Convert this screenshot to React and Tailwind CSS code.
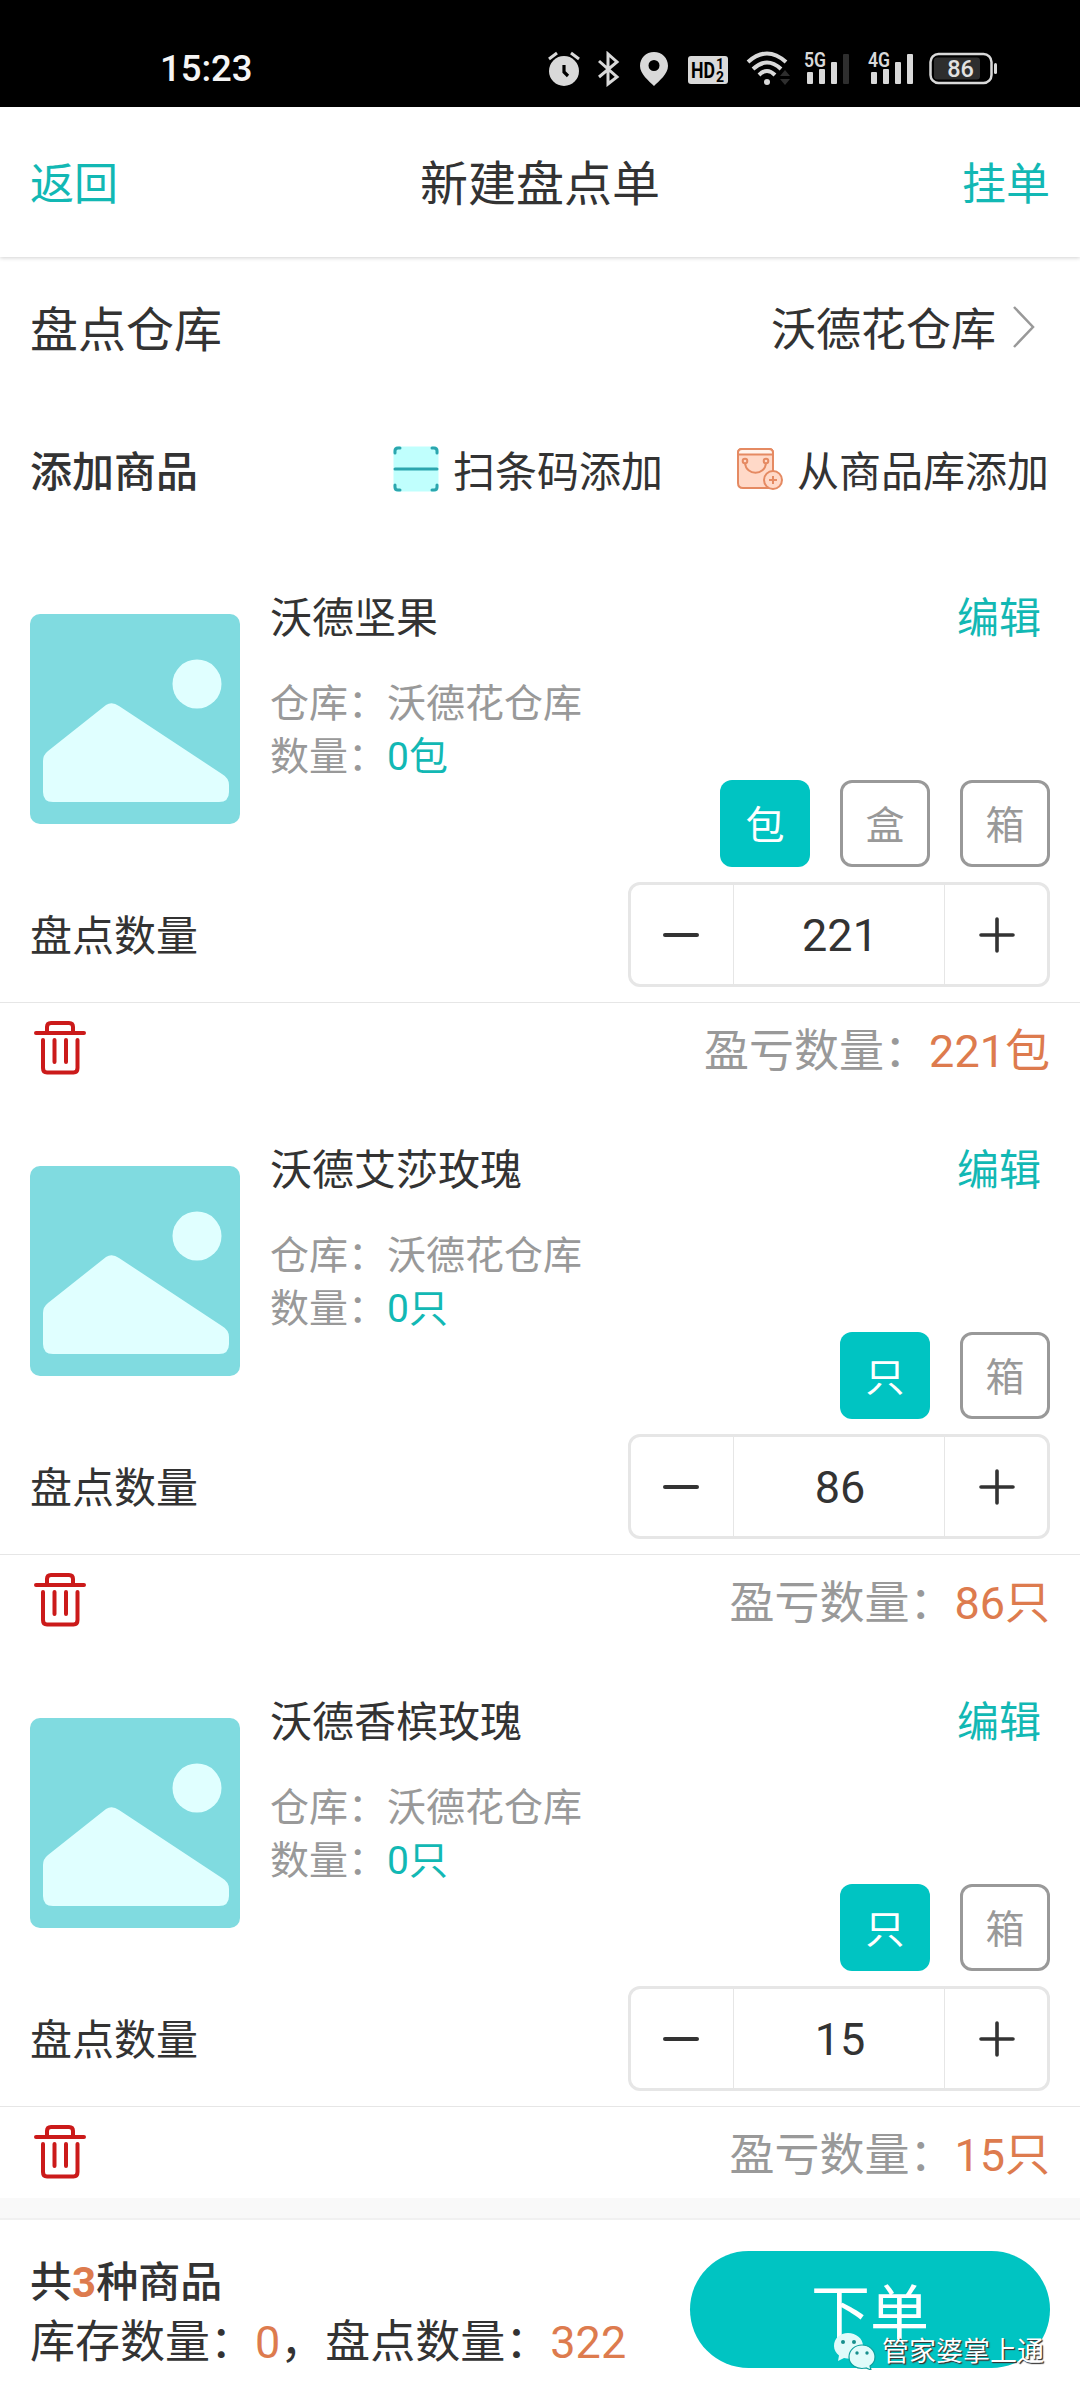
import { useState } from "react";

const initialItems = [
  { id: 1, name: "沃德坚果", warehouse: "沃德花仓库", stock: 0, units: ["包", "盒", "箱"], count: 221 },
  { id: 2, name: "沃德艾莎玫瑰", warehouse: "沃德花仓库", stock: 0, units: ["只", "箱"], count: 86 },
  { id: 3, name: "沃德香槟玫瑰", warehouse: "沃德花仓库", stock: 0, units: ["只", "箱"], count: 15 },
];

function SignalBars({ label, dimLast }) {
  return (
    <svg width="48" height="48" viewBox="0 -6 48 48" fill="#d9d9d9">
      <text x="1" y="15.500" fontSize="20" fontWeight="600" textLength="22" lengthAdjust="spacingAndGlyphs">
        {label}
      </text>
      <rect x="4" y="21" width="6" height="12" rx="1" />
      <rect x="16" y="18" width="6" height="15" rx="1" />
      <rect x="28" y="11" width="6" height="22" rx="1" />
      <rect x="40" y="3" width="6" height="30" rx="1" fill={dimLast ? "#2e2e2e" : "#d9d9d9"} />
    </svg>
  );
}

function StatusBar() {
  return (
    <div className="flex h-[107px] items-center bg-black pt-[31px] pl-[160px] text-[#e2e2e2]">
      <div className="w-[387px] text-[36.5px] leading-none font-medium text-[#f5f5f5]">15:23</div>
      <svg width="34" height="36" viewBox="0 0 34 36">
        <circle cx="17" cy="20" r="15" fill="#d9d9d9" />
        <path d="M2 8l8-6M32 8l-8-6" stroke="#d9d9d9" strokeWidth="3" />
        <path d="M17 14v7l4 4" stroke="#000" strokeWidth="3.2" fill="none" />
      </svg>
      <svg className="ml-[15px]" width="24" height="36" viewBox="0 0 24 36" fill="none" stroke="#d9d9d9" strokeWidth="3">
        <path d="M3 10l18 16-9 7V3l9 8L3 26" />
      </svg>
      <svg className="ml-[19px]" width="30" height="36" viewBox="0 0 30 36" fill="#d9d9d9" fillRule="evenodd">
        <path d="M15 1C7 1 1 7 1 15c0 8 9 15 14 20 5-5 14-12 14-20C29 7 23 1 15 1zm0 8a5.500 5.500 0 110 11 5.500 5.500 0 010-11z" />
      </svg>
      <svg className="ml-[18px]" width="42" height="36" viewBox="0 0 42 36" fontWeight="700">
        <rect x="1" y="5" width="40" height="28" rx="3" fill="#d9d9d9" />
        <text x="4" y="27" fontSize="22" textLength="24" lengthAdjust="spacingAndGlyphs">HD</text>
        <text x="29" y="18" fontSize="14">1</text>
        <text x="29" y="31" fontSize="14">2</text>
      </svg>
      <svg className="ml-[17px]" width="46" height="36" viewBox="0 0 46 36" fill="none" stroke="#d9d9d9" strokeWidth="4">
        <path d="M2 11Q21-6 40 11M7 18Q21 5 35 18M13 24Q21 16 29 24" />
        <circle cx="21" cy="31" r="3" fill="#d9d9d9" stroke="none" />
        <path d="M34 25l5-6 5 6zM34 28l5 6 5-6z" fill="#2e2e2e" stroke="none" />
      </svg>
      <div className="ml-[11px]"><SignalBars label="5G" dimLast /></div>
      <div className="ml-[16px]"><SignalBars label="4G" /></div>
      <svg className="ml-[14px]" width="70" height="36" viewBox="0 0 70 36">
        <rect x="1.500" y="3" width="61" height="29" rx="8" fill="none" stroke="#d9d9d9" strokeWidth="2.500" />
        <rect x="5" y="6.500" width="46" height="22" rx="3" fill="#2e2e2e" />
        <rect x="65" y="12" width="3" height="11" rx="1.500" fill="#d9d9d9" />
        <text x="31.500" y="26" fontSize="23.500" fontWeight="500" textAnchor="middle" fill="#e2e2e2">86</text>
      </svg>
    </div>
  );
}

function ScanIcon() {
  return (
    <svg className="mb-[6px]" width="46" height="46" viewBox="0 0 46 46" fill="none" stroke="#2ba6ae" strokeWidth="3" strokeLinecap="round">
      <rect x="0.500" y="0.500" width="45" height="45" rx="4" fill="#c0fffd" stroke="none" />
      <path d="M2 7V5q0-3 3-3h2M39 2h2q3 0 3 3v2M2 39v2q0 3 3 3h2M39 44h2q3 0 3-3v-2" />
      <path d="M2 23h42" />
    </svg>
  );
}

function BagIcon() {
  return (
    <svg className="mb-[6px]" width="46" height="42" viewBox="0 0 46 42" fill="#ffd9c8" stroke="#e58a62" strokeWidth="2">
      <path d="M1 5q0-4 4-4h27q4 0 4 4v31q0 4-4 4H6q-5 0-5-5z" />
      <path d="M1 6.500V5q0-4 4-4h27q4 0 4 4v1.500z" fill="#fff3ec" />
      <path d="M8 15c1 13 20 13 21 0" fill="none" />
      <circle cx="8" cy="13" r="2.300" />
      <circle cx="29" cy="13" r="2.300" />
      <circle cx="36" cy="32" r="9" />
      <path d="M32 32h8M36 28v8" />
    </svg>
  );
}

function Placeholder() {
  return (
    <svg className="shrink-0" width="210" height="210" viewBox="0 0 210 210">
      <rect width="210" height="210" rx="10" fill="#80dbe0" />
      <circle cx="167" cy="70" r="24.500" fill="#e0ffff" />
      <path
        d="M76 91q6-4 13 1l103 68q7 4 7 11v7q0 10-10 10H23q-10 0-10-10v-31q0-6 5-10z"
        fill="#e0ffff"
      />
    </svg>
  );
}

function TrashIcon() {
  return (
    <svg width="52" height="54" viewBox="0 0 52 54" fill="none" stroke="#cb1a1a" strokeWidth="4" strokeLinecap="round">
      <path d="M2 12h48M13 11V6q0-4 4-4h18q4 0 4 4v5" />
      <path d="M9 19v28q0 4.500 4 4.500h26.500q4 0 4-4.500V19M20.500 19v22M32 19v22" />
    </svg>
  );
}

function Stepper({ value, onChange }) {
  return (
    <div className="flex h-[105px] w-[422px] rounded-[12px] border-3 border-[#e6e6e6]">
      <button type="button" onClick={() => onChange(value - 1)} className="flex w-[103px] items-center justify-center border-r border-[#e6e6e6] pr-[2px]">
        <span className="h-[4px] w-[36px] rounded-full bg-[#333]" />
      </button>
      <div className="flex flex-1 items-center justify-center pt-[2px] pl-[2px] text-[45px] leading-none">{value}</div>
      <button type="button" onClick={() => onChange(value + 1)} className="flex w-[103px] items-center justify-center border-l border-[#e6e6e6] pl-[2px]">
        <svg width="36" height="36" viewBox="0 0 36 36" stroke="#333" strokeWidth="3.600" strokeLinecap="round">
          <path d="M2 18h32M18 2v32" />
        </svg>
      </button>
    </div>
  );
}

function ItemCard({ item, onCount }) {
  const [unit, setUnit] = useState(item.units[0]);

  return (
    <div className="h-[552px]">
      <div className="flex h-[238px] px-[30px] pt-[44px]">
        <div className="pt-[28px]"><Placeholder /></div>
        <div className="ml-[30px] flex-1 pt-[2px]">
          <div className="flex justify-between pr-[9px] text-[42px] leading-[62px]">
            <span>{item.name}</span>
            <button type="button" className="text-[#12b8b4]">编辑</button>
          </div>
          <div className="mt-[28px] text-[39px] leading-[53px] text-[#999]">
            <div>仓库：{item.warehouse}</div>
            <div>
              数量：<span className="text-[#12b8b4]">{item.stock}{unit}</span>
            </div>
          </div>
        </div>
      </div>
      <div className="flex h-[87px] justify-end gap-[30px] pr-[30px]">
        {item.units.map((u) => (
          <button
            key={u}
            type="button"
            onClick={() => setUnit(u)}
            className={
              u === unit
                ? "h-[87px] w-[90px] rounded-[12px] bg-[#00c4c2] pt-[5px] text-[39px] leading-none text-white"
                : "h-[87px] w-[90px] rounded-[12px] border-3 border-[#999] pt-[5px] text-[39px] leading-none text-[#999]"
            }
          >
            {u}
          </button>
        ))}
      </div>
      <div className="mt-[15px] flex h-[105px] items-center justify-between px-[30px]">
        <span className="pt-[5px] text-[42px] leading-none">盘点数量</span>
        <Stepper value={item.count} onChange={onCount} />
      </div>
      <div className="mt-[15px] flex h-[92px] items-start justify-between border-t border-[#e6e6e6] pr-[30px] pl-[34px]">
        <button type="button" className="mt-[18px]"><TrashIcon /></button>
        <div className="mt-[16px] text-[45px] leading-[66px] text-[#999]">
          盈亏数量：<span className="text-[#dd7b4e]">{item.count - item.stock}{unit}</span>
        </div>
      </div>
    </div>
  );
}

function Watermark() {
  return (
    <div className="absolute top-[2330px] left-[833px] flex items-center gap-[6px]">
      <svg width="43" height="38" viewBox="0 0 43 38" fill="#e0fbfa">
        <path d="M15 1C7 1 1 6.500 1 14c0 4 2 7 5 9.500L5 29l6-3c13 3 19-4 19-12C30 6.500 23 1 15 1z" />
        <path
          d="M29 13c-7 0-13 5-13 12 0 8 8 13 17 11l5 2-1-4c3-2 5-5 5-9 0-7-6-12-13-12z"
          stroke="#0d9f9d"
          strokeWidth="1.200"
        />
        <g fill="#178f8d">
          <circle cx="10" cy="10" r="2" />
          <circle cx="21" cy="10" r="2" />
          <circle cx="24" cy="21" r="1.700" />
          <circle cx="34" cy="21" r="1.700" />
        </g>
      </svg>
      <span className="pt-[2px] text-[27px] leading-[40px] text-white [text-shadow:1px_1px_1px_#333,1px_1px_1px_#555]">
        管家婆掌上通
      </span>
    </div>
  );
}

export default function App() {
  const [items, setItems] = useState(initialItems);

  const setCount = (id, count) => {
    setItems(items.map((it) => (it.id === id ? { ...it, count } : it)));
  };

  const stockTotal = items.reduce((sum, it) => sum + it.stock, 0);
  const countTotal = items.reduce((sum, it) => sum + it.count, 0);

  return (
    <div className="relative flex h-[2400px] w-[1080px] flex-col overflow-hidden bg-white font-[Roboto,'Noto_Sans_CJK_SC',sans-serif] text-[#333]">
      <StatusBar />

      <header className="flex h-[150px] items-center justify-between px-[30px] pt-[6px] text-[44px] shadow-[0_1px_4px_rgba(0,0,0,0.18)]">
        <button type="button" className="text-[#12b8b4]">返回</button>
        <h1 className="text-[48px]">新建盘点单</h1>
        <button type="button" className="text-[#12b8b4]">挂单</button>
      </header>

      <div className="flex h-[145px] items-center justify-between pr-[45px] pl-[30px]">
        <span className="pt-[2px] text-[48px]">盘点仓库</span>
        <div className="flex items-center gap-[17px] text-[45px]">
          <span className="pt-[3px]">沃德花仓库</span>
          <svg className="mb-[5px]" width="22" height="42" viewBox="0 0 22 42" fill="none" stroke="#999" strokeWidth="2.500">
            <path d="M1 1l19 20L1 41" />
          </svg>
        </div>
      </div>

      <div className="flex h-[140px] items-center pr-[31px] pl-[30px] text-[42px]">
        <span className="flex-1 font-medium">添加商品</span>
        <button type="button" className="flex items-center gap-[14px]">
          <ScanIcon />
          扫条码添加
        </button>
        <button type="button" className="ml-[74px] flex items-center gap-[14px]">
          <BagIcon />
          从商品库添加
        </button>
      </div>

      {items.map((item) => (
        <ItemCard key={item.id} item={item} onCount={(n) => setCount(item.id, n)} />
      ))}

      <div className="h-[22px] border-b-2 border-[#f1f1f1] bg-[#f9f9f9]" />

      <footer className="flex flex-1 items-start justify-between px-[30px]">
        <div className="pt-[33px]">
          <div className="text-[42px] leading-[60px] font-medium">
            共<span className="font-bold text-[#dd7b4e]">{items.length}</span>种商品
          </div>
          <div className="text-[45px] leading-[60px]">
            库存数量：<span className="text-[#dd7b4e]">{stockTotal}</span>，盘点数量：
            <span className="text-[#dd7b4e]">{countTotal}</span>
          </div>
        </div>
        <button type="button" className="mt-[31px] h-[117px] w-[360px] rounded-full bg-[#00c4c2] pt-[7px] text-[59px] leading-none text-white">
          下单
        </button>
      </footer>

      <Watermark />
    </div>
  );
}
